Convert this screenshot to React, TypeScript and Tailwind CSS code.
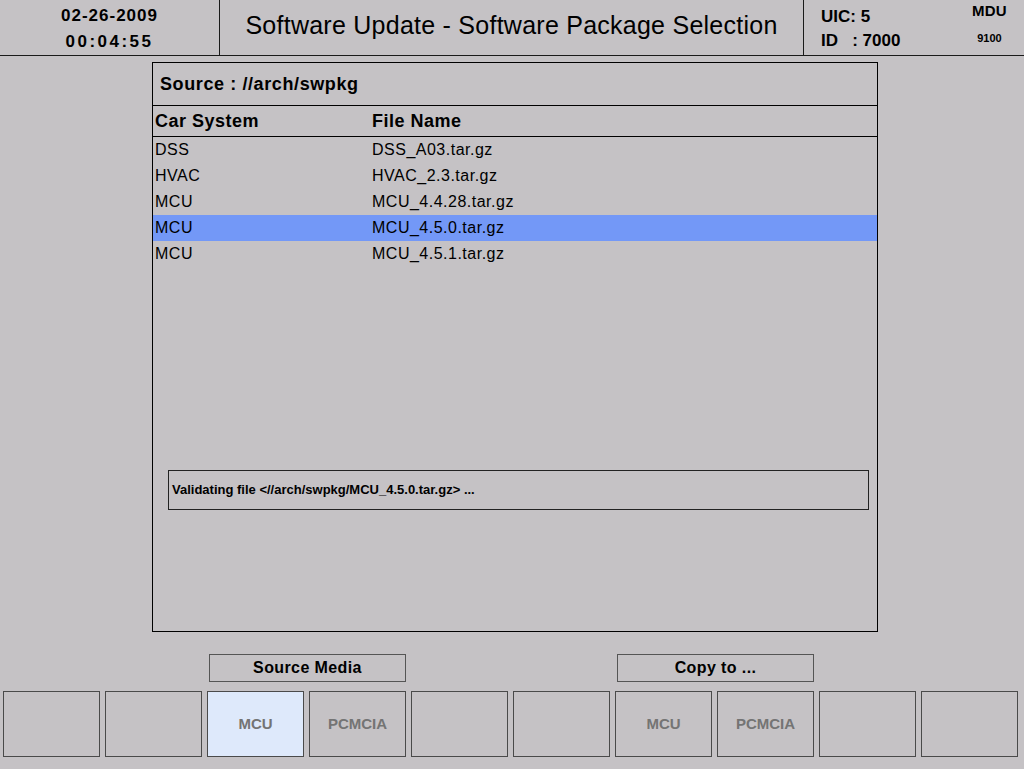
const rows = [
  { sys: "DSS", file: "DSS_A03.tar.gz" },
  { sys: "HVAC", file: "HVAC_2.3.tar.gz" },
  { sys: "MCU", file: "MCU_4.4.28.tar.gz" },
  { sys: "MCU", file: "MCU_4.5.0.tar.gz", selected: true },
  { sys: "MCU", file: "MCU_4.5.1.tar.gz" },
];

const softKeys = [
  { label: "" },
  { label: "" },
  { label: "MCU", active: true },
  { label: "PCMCIA" },
  { label: "" },
  { label: "" },
  { label: "MCU" },
  { label: "PCMCIA" },
  { label: "" },
  { label: "" },
];

function Header() {
  return (
    <header className="flex h-[56px] border-b border-[#1a1a1a]">
      <div className="flex w-[220px] flex-col items-center border-r border-[#1a1a1a] pt-[4px] text-[17px] font-bold leading-[24px]">
        <span className="tracking-[1px]">02-26-2009</span>
        <span className="mt-[2px] tracking-[2.5px]">00:04:55</span>
      </div>
      <div className="flex w-[584px] items-center justify-center border-r border-[#1a1a1a] pb-[4px] text-[25px] tracking-[0.25px]">
        Software Update - Software Package Selection
      </div>
      <div className="flex flex-1 justify-between pl-[17px] pr-[17px]">
        <div className="flex flex-col pt-[5px] text-[17px] font-bold leading-[24px]">
          <span>UIC: 5</span>
          <span className="whitespace-pre">ID   : 7000</span>
        </div>
        <div className="flex flex-col items-center pt-[2px] font-bold">
          <span className="text-[15px] leading-[18px] tracking-[0.3px]">MDU</span>
          <span className="mt-[11px] text-[11px] leading-[14px]">9100</span>
        </div>
      </div>
    </header>
  );
}

function PackagePanel() {
  return (
    <section className="ml-[152px] mt-[6px] flex h-[570px] w-[726px] flex-col border border-black">
      <div className="flex h-[43px] items-center border-b border-black pl-[7px] text-[18px] font-bold tracking-[0.6px]">
        Source : //arch/swpkg
      </div>
      <div className="grid h-[31px] grid-cols-[217px_1fr] items-center border-b border-black pl-[2px] text-[18px] font-bold tracking-[0.5px]">
        <span>Car System</span>
        <span>File Name</span>
      </div>
      <div className="flex flex-col">
        {rows.map((r, i) => (
          <div
            key={i}
            className={`grid h-[26px] grid-cols-[217px_1fr] items-center pl-[2px] text-[16px] tracking-[0.5px] ${
              r.selected ? "bg-[#7398f7]" : ""
            }`}
          >
            <span>{r.sys}</span>
            <span>{r.file}</span>
          </div>
        ))}
      </div>
      <div className="ml-[15px] mt-[203px] flex h-[40px] w-[701px] items-center border border-[#222] pl-[3px] text-[13px] font-bold">
        Validating file &lt;//arch/swpkg/MCU_4.5.0.tar.gz&gt; ...
      </div>
    </section>
  );
}

function SoftKeys() {
  return (
    <div className="mt-[22px] flex flex-col gap-[9px] pl-[3px] pr-[6px]">
      <div className="grid grid-cols-10 gap-[5px]">
        <div className="col-span-2 col-start-3 ml-[2px] flex h-[28px] items-center justify-center border border-[#555] text-[16px] font-bold tracking-[0.4px]">
          Source Media
        </div>
        <div className="col-span-2 col-start-7 ml-[2px] flex h-[28px] items-center justify-center border border-[#555] text-[16px] font-bold tracking-[0.4px]">
          Copy to ...
        </div>
      </div>
      <div className="grid grid-cols-10 gap-[5px]">
        {softKeys.map((k, i) => (
          <div
            key={i}
            className={`flex h-[66px] items-center justify-center border border-[#4a4a4a] text-[15px] font-bold text-[#747474] ${
              k.active ? "bg-[#dee9fb]" : ""
            }`}
          >
            {k.label}
          </div>
        ))}
      </div>
    </div>
  );
}

export default function App() {
  return (
    <div
      className="flex h-[769px] w-[1024px] flex-col overflow-hidden bg-[#c5c2c5] text-black"
      style={{ fontFamily: '"Liberation Sans", Arial, sans-serif' }}
    >
      <Header />
      <PackagePanel />
      <SoftKeys />
    </div>
  );
}
